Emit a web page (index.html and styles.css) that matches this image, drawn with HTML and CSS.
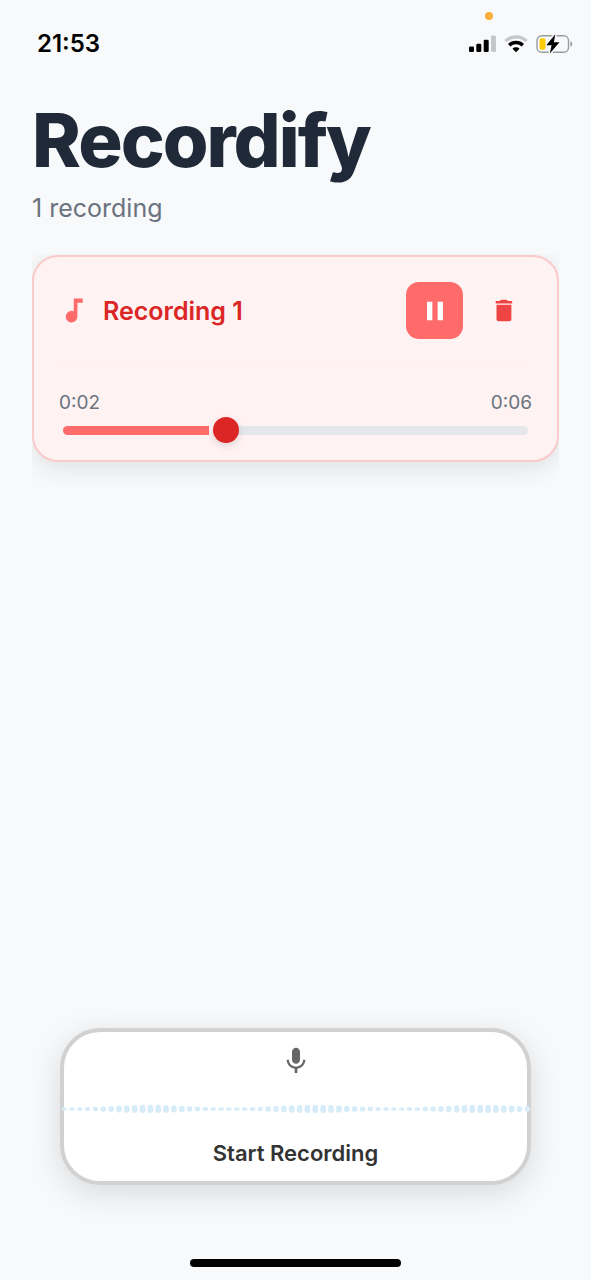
FILE: index.html
```
<!DOCTYPE html>
<html lang="en">
<head>
<meta charset="utf-8">
<meta name="viewport" content="width=device-width, initial-scale=1">
<title>Recordify</title>
<link rel="stylesheet" href="styles.css">
</head>
<body>
<div class="screen">
  <div class="status-bar">
    <span class="mic-indicator"></span>
    <time class="clock">21:53</time>
    <div class="status-icons">
      <svg class="signal" viewBox="0 0 27 18" aria-hidden="true">
        <rect x="0" y="11.5" width="5" height="5.5" rx="1.3"/>
        <rect x="7.3" y="8.7" width="5" height="8.3" rx="1.3"/>
        <rect x="14.7" y="4.8" width="5" height="12.2" rx="1.3"/>
        <rect x="22" y="0.5" width="5" height="16.5" rx="1.3" fill="#c6c7c9"/>
      </svg>
      <svg class="wifi" viewBox="0 0 24 18" aria-hidden="true">
        <path d="M1.500 6.100C7 .4 17 .4 22.500 6.100" fill="none" stroke="#c6c7c9" stroke-width="3.300"/>
        <path d="M5.200 10.200c3.700-3.700 9.900-3.700 13.600 0" fill="none" stroke="#000" stroke-width="3.400"/>
        <path d="M8.500 13.700c2-1.900 5-1.900 7 0L12 17.300z"/>
      </svg>
      <svg class="battery" viewBox="0 0 37 20" aria-hidden="true">
        <rect x="1" y="1.800" width="31.500" height="16.400" rx="4.800" fill="none" stroke="#9b9c9e" stroke-width="1.400"/>
        <path d="M34.300 7.300c2.600.8 2.600 4.700 0 5.500z" fill="#9b9c9e"/>
        <path d="M19.300.3 10.300 11.200h5.300L13.800 19.500l9.700-11.200h-5.600z" stroke="#f8f9fb" stroke-width="3"/>
        <rect x="3.500" y="4.200" width="6" height="11.600" rx="1.800" fill="#fccc0a"/>
        <path d="M19.300.3 10.300 11.200h5.300L13.800 19.500l9.700-11.200h-5.600z"/>
      </svg>
    </div>
  </div>

  <header class="header">
    <h1 class="title">Recordify</h1>
    <p class="count">1 recording</p>
  </header>

  <main class="list">
    <article class="card">
      <div class="card-top">
        <svg class="note" viewBox="0 0 32 32" aria-hidden="true"><path d="M14.800 3.600H23.800V7.700H18.400V21.700A5.800 5.800 0 1 1 14.800 16.300z"/></svg>
        <h2 class="name">Recording 1</h2>
        <button class="pause" type="button" aria-label="Pause">
          <svg viewBox="0 0 24 24" aria-hidden="true"><path d="M6 19h4V5H6v14zm8-14v14h4V5h-4z"/></svg>
        </button>
        <button class="delete" type="button" aria-label="Delete">
          <svg viewBox="0 0 28 28" aria-hidden="true"><path d="M6.500 7.800H21.400V21.800Q21.400 24.300 18.900 24.300H9Q6.500 24.300 6.500 21.800zM5.700 4H10Q10.300 2.700 11.600 2.700H16.200Q17.500 2.700 17.800 4H22.200V6.400H5.700z"/></svg>
        </button>
      </div>
      <div class="player">
        <div class="times"><span>0:02</span><span>0:06</span></div>
        <input class="seek" type="range" min="0" max="1000" value="342" style="--progress: 0.342" aria-label="Playback position">
      </div>
    </article>
  </main>

  <footer class="footer">
    <button class="record" type="button">
      <svg class="mic" viewBox="0 0 24 24" aria-hidden="true"><path d="M12 14c1.660 0 3-1.340 3-3V5c0-1.660-1.340-3-3-3S9 3.340 9 5v6c0 1.660 1.340 3 3 3z"/><path d="M17.300 11c0 3-2.540 5.100-5.300 5.100S6.700 14 6.700 11H5c0 3.410 2.720 6.230 6 6.720V21h2v-3.280c3.280-.48 6-3.300 6-6.720h-1.700z"/></svg>
      <svg class="wave" viewBox="0 0 472 12" aria-hidden="true"></svg>
      <span class="record-label">Start Recording</span>
    </button>
    <div class="home-bar"></div>
  </footer>
</div>
<script src="wave.js"></script>
</body>
</html>
```
FILE: styles.css
```
* {
  box-sizing: border-box;
}

body {
  margin: 0;
  background: #f8f9fb;
  font-family: Inter, "Liberation Sans", sans-serif;
}

h1, h2, p {
  margin: 0;
}

button {
  padding: 0;
  border: 0;
  background: none;
  font: inherit;
}

.screen {
  display: flex;
  flex-direction: column;
  min-height: 100vh;
}

.status-bar {
  position: relative;
  display: flex;
  align-items: center;
  justify-content: space-between;
  height: 88px;
  padding: 0 18px 0 37px;
}

.mic-indicator {
  position: absolute;
  top: 12px;
  right: 98px;
  width: 8px;
  height: 8px;
  border-radius: 50%;
  background: #fbae3c;
}

.clock {
  font-size: 24px;
  font-weight: 600;
  line-height: 28px;
}

.status-icons {
  display: flex;
  align-items: center;
  gap: 8px;
}

.signal {
  width: 27px;
  height: 18px;
}

.wifi {
  width: 24px;
  height: 18px;
}

.battery {
  width: 37px;
  height: 20px;
}

.header {
  padding: 7px 32px 0;
}

.title {
  color: #1f2937;
  font-size: 74px;
  font-weight: 800;
  line-height: 90px;
  letter-spacing: -2px;
}

.count {
  margin-top: 7px;
  color: #6b7280;
  font-size: 25px;
  line-height: 32px;
}

.list {
  flex: 1;
  margin: 30px 32px 0;
  overflow: hidden;
}

.card {
  margin-top: 1px;
  padding: 25px 25px 17px;
  border: 2px solid #fbcaca;
  border-radius: 26px;
  background: #fef2f2;
  box-shadow: 0 6px 24px rgba(0, 0, 0, 0.1);
}

.card-top {
  display: flex;
  align-items: center;
}

.note {
  width: 32px;
  height: 32px;
  fill: #ff6b6b;
}

.name {
  flex: 1;
  margin-left: 12px;
  color: #dc2626;
  font-size: 25px;
  font-weight: 600;
  line-height: 32px;
}

.pause,
.delete {
  display: grid;
  place-items: center;
  width: 57px;
  height: 57px;
  border-radius: 13px;
}

.pause {
  background: #ff6b6b;
}

.pause svg {
  width: 32px;
  height: 32px;
  fill: #fff;
}

.delete {
  margin-left: 12px;
}

.delete svg {
  width: 28px;
  height: 28px;
  fill: #ef4444;
}

.player {
  margin-top: 24px;
  padding-top: 27px;
  border-top: 1px solid #fcf0f1;
}

.times {
  display: flex;
  justify-content: space-between;
  color: #6b7280;
  font-size: 19px;
  line-height: 24px;
}

.seek {
  --thumb: 26px;
  --edge: calc((100% - var(--thumb)) * var(--progress));
  display: block;
  appearance: none;
  width: calc(100% - 8px);
  height: 26px;
  margin: 2px 4px 0;
  background: none;
}

.seek::-webkit-slider-runnable-track {
  height: 9px;
  border-radius: 5px;
  background: linear-gradient(to right, #ff6b6b calc(var(--edge) - 4px), #fef2f2 calc(var(--edge) - 4px), #fef2f2 calc(var(--edge) + 8px), #e5e7eb calc(var(--edge) + 8px));
}

.seek::-webkit-slider-thumb {
  appearance: none;
  width: 26px;
  height: 26px;
  margin-top: -9px;
  border-radius: 50%;
  background: #dc2626;
  box-shadow: 0 3px 8px rgba(0, 0, 0, 0.12);
}

.footer {
  display: flex;
  flex-direction: column;
  align-items: center;
  padding: 0 60px 13px;
}

.record {
  display: flex;
  flex-direction: column;
  align-items: center;
  width: 100%;
  padding: 13px 0 12px;
  border: 4px solid #d1d1d1;
  border-radius: 40px;
  background: #fff;
  box-shadow: 0 8px 32px rgba(0, 0, 0, 0.13);
}

.mic {
  width: 32px;
  height: 32px;
  fill: #666;
}

.wave {
  width: calc(100% + 8px);
  height: 12px;
  margin: 26px -4px 0;
  fill: #d6edf9;
}

.record-label {
  margin-top: 22px;
  color: #333;
  font-size: 22px;
  font-weight: 600;
  line-height: 32px;
}

.home-bar {
  width: 211px;
  height: 8px;
  margin-top: 74px;
  border-radius: 4px;
  background: #000;
}
```
FILE: wave.js
```
const wave = document.querySelector(".wave");
const BARS = 60;
const STEP = 7.87;

for (let i = 0; i < BARS; i++) {
  const center = 4 + i * STEP;
  const level = (1 + Math.cos((2 * Math.PI * (center - 88)) / 167)) / 2;
  const height = 3 + 5.5 * level;
  const bar = document.createElementNS("http://www.w3.org/2000/svg", "rect");
  bar.setAttribute("x", center - 2.8);
  bar.setAttribute("y", 6 - height / 2);
  bar.setAttribute("width", 5.6);
  bar.setAttribute("height", height);
  bar.setAttribute("rx", Math.min(2.8, height / 2));
  wave.appendChild(bar);
}
```
